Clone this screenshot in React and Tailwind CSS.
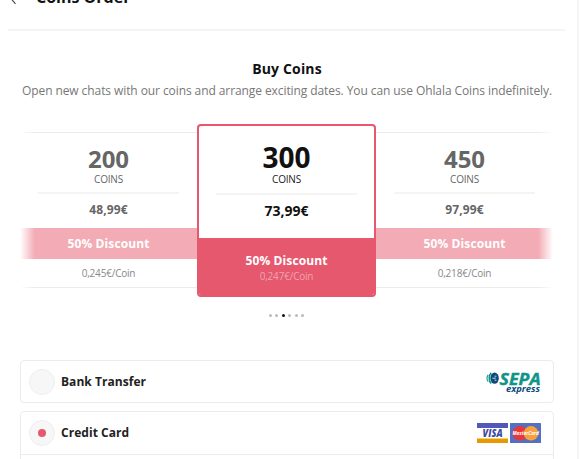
import React, { useState } from 'react';
import clsx from 'clsx';

const PACKAGES = [
    { coins: 200, price: '48,99€', perCoin: '0,245€/Coin' },
    { coins: 300, price: '73,99€', perCoin: '0,247€/Coin' },
    { coins: 450, price: '97,99€', perCoin: '0,218€/Coin' },
];

const SepaLogo = () => (
    <svg width="56" height="24" viewBox="-1 -1 56 24" overflow="visible" fontFamily="'Open Sans', sans-serif" fontStyle="italic">
        <ellipse cx="8.6" cy="7.2" rx="4.2" ry="5.6" fill="#0b4a7d" />
        <path d="M5.2 1.9C2.6 4.2 2.6 10.2 5.2 12.5" fill="none" stroke="#0f9488" strokeWidth="1.6" />
        <path d="M2.2 3.8C0.6 5.6 0.6 8.8 2.2 10.6" fill="none" stroke="#0f9488" strokeWidth="1.1" />
        <path d="M6.4 7.2h3.4M8.6 5.2h1.8M8.6 9.2h1.8" fill="none" stroke="#fff" strokeWidth="0.8" />
        <text x="13.6" y="13.6" fontSize="16.5" fontWeight="700" fill="#0f9488" stroke="#0f9488" strokeWidth="0.4" textLength="41" lengthAdjust="spacingAndGlyphs">SEPA</text>
        <text x="20" y="20.6" fontSize="9" fontWeight="700" fill="#0b4a7d" textLength="34" lengthAdjust="spacingAndGlyphs">express</text>
    </svg>
);

const VisaLogo = () => (
    <svg width="31" height="20" viewBox="0 0 31 20">
        <rect width="31" height="20" fill="#fff" />
        <rect width="31" height="5" fill="#5358b8" />
        <rect y="15.5" width="31" height="4.5" fill="#e59a00" />
        <text x="5.6" y="14.1" fontSize="10" fontWeight="800" fontStyle="italic" fontFamily="'Open Sans', sans-serif" fill="#3f4aa8" textLength="20" lengthAdjust="spacingAndGlyphs">VISA</text>
    </svg>
);

const MasterCardLogo = () => (
    <svg width="31" height="20" viewBox="0 0 31 20">
        <rect width="31" height="20" rx="0.5" fill="#5570c0" />
        <circle cx="10" cy="10.3" r="7.3" fill="#e8363b" />
        <circle cx="21" cy="10.3" r="7.3" fill="#f9a13a" />
        <text x="2.4" y="12" fontSize="5" fontWeight="700" fontStyle="italic" fontFamily="'Open Sans', sans-serif" fill="#fff" textLength="26.5" lengthAdjust="spacingAndGlyphs">MasterCard</text>
    </svg>
);

const SidePackage = ({ pack }) => (
    <div className="mt-[8px] flex h-[156px] w-[177px] shrink-0 flex-col border-y border-[#ebebeb] text-center text-[#666]">
        <div className="pt-[10px] text-[24px] leading-[32px] font-bold">{pack.coins}</div>
        <div className="-mt-px text-[10px] leading-[10px] tracking-[-0.2px]">COINS</div>
        <div className="mx-[18px] mt-[8px] h-[2px] bg-[#f4f4f4]" />
        <div className="mt-[7px] text-[12px] leading-[18px] font-bold tracking-[0.1px]">{pack.price}</div>
        <div className="mt-[9px] h-[31px] bg-[#f3abb5] text-[12px] leading-[31px] font-bold tracking-[0.1px] text-white">50% Discount</div>
        <div className="mt-[7px] text-[10px] leading-[14px] tracking-[-0.2px] text-[#888]">{pack.perCoin}</div>
    </div>
);

const ActivePackage = ({ pack }) => (
    <div className="flex h-[173px] w-[179px] shrink-0 flex-col overflow-hidden rounded-[4px] border-2 border-[#e6586d] bg-white text-center text-[#111]">
        <div className="pt-[12px] text-[28px] leading-[38px] font-bold">{pack.coins}</div>
        <div className="-mt-[2px] text-[10px] leading-[10px] tracking-[-0.2px] text-[#222]">COINS</div>
        <div className="mx-[17px] mt-[9px] h-[2px] bg-[#f4f4f4]" />
        <div className="mt-[6px] text-[14px] leading-[20px] font-bold">{pack.price}</div>
        <div className="mt-auto h-[57px] bg-[#e6586d] pt-[15px]">
            <div className="text-[12px] leading-[16px] font-bold tracking-[0.1px] text-white">50% Discount</div>
            <div className="text-[10px] leading-[14px] tracking-[-0.2px] text-[#f3a3af]">{pack.perCoin}</div>
        </div>
    </div>
);

const PaymentMethod = ({ label, selected, onSelect, open, children }) => (
    <div className={clsx('rounded-[4px] border border-[#ebebeb]', open ? 'h-[80px]' : 'h-[43px]')}>
        <button
            onClick={onSelect}
            className={clsx('flex w-full items-center pr-[12px] pl-[8px]', open ? 'h-[43px] border-b border-[#ebebeb]' : 'h-[41px]')}
        >
            <span className="flex h-[26px] w-[26px] items-center justify-center rounded-full border border-[#eee] bg-[#f7f7f7]">
                {selected && <span className="h-[8px] w-[8px] rounded-full bg-[#e6586d]" />}
            </span>
            <span className="ml-[6px] text-[12px] font-bold tracking-[0.05px] text-[#222]">{label}</span>
            <span className="ml-auto flex gap-[2px]">{children}</span>
        </button>
    </div>
);

const App = () => {
    const [method, setMethod] = useState('card');

    return (
        <div className="h-[459px] w-[580px] overflow-hidden bg-white font-['Open_Sans',sans-serif]">
            <div className="h-[459px] w-[579px] overflow-hidden border-r-2 border-[#f4f4f4]">
                {/* Header */}
                <div className="mr-[12px] ml-[8px] flex h-[31px] items-start border-b-2 border-[#f4f4f4]">
                    <div className="-mt-[15px] flex h-[24px] items-center">
                        <svg width="10" height="16" viewBox="0 0 10 16" className="ml-[1px]" fill="none" stroke="#444" strokeWidth="1.1">
                            <path d="M7 2.5L1.5 9l5 5.8" />
                        </svg>
                        <span className="ml-[17px] text-[16px] leading-[24px] font-bold text-[#111]">Coins Order</span>
                    </div>
                </div>

                <div className="mr-[3px] mt-[28px] text-center">
                    <h2 className="text-[14px] leading-[20px] font-bold tracking-[0.15px] text-[#111]">Buy Coins</h2>
                    <p className="mt-[3px] text-[12px] leading-[18px] tracking-[-0.085px] whitespace-nowrap text-[#777]">
                        Open new chats with our coins and arrange exciting dates. You can use Ohlala Coins indefinitely.
                    </p>
                </div>

                {/* Coin packages */}
                <div className="relative mt-[24px] ml-[20px] flex w-[533px] items-start justify-center">
                    <SidePackage pack={PACKAGES[0]} />
                    <ActivePackage pack={PACKAGES[1]} />
                    <SidePackage pack={PACKAGES[2]} />
                    <div className="absolute inset-y-0 left-0 w-[15px] bg-linear-to-r from-white to-transparent" />
                    <div className="absolute inset-y-0 right-0 w-[15px] bg-linear-to-l from-white to-transparent" />
                </div>
                <div className="mt-[17px] mr-[4px] flex h-[3px] justify-center gap-[3.4px]">
                    {[0, 1, 2, 3, 4, 5].map(i => (
                        <span key={i} className={clsx('h-[3px] w-[3px] rounded-full', i === 2 ? 'bg-[#111]' : 'bg-[#bbb]')} />
                    ))}
                </div>

                {/* Payment methods */}
                <div className="mt-[43px] ml-[20px] w-[534px] space-y-[8px]">
                    <PaymentMethod label="Bank Transfer" selected={method === 'bank'} onSelect={() => setMethod('bank')}>
                        <SepaLogo />
                    </PaymentMethod>
                    <PaymentMethod label="Credit Card" open selected={method === 'card'} onSelect={() => setMethod('card')}>
                        <VisaLogo />
                        <MasterCardLogo />
                    </PaymentMethod>
                </div>
            </div>
        </div>
    );
};

export default App;
